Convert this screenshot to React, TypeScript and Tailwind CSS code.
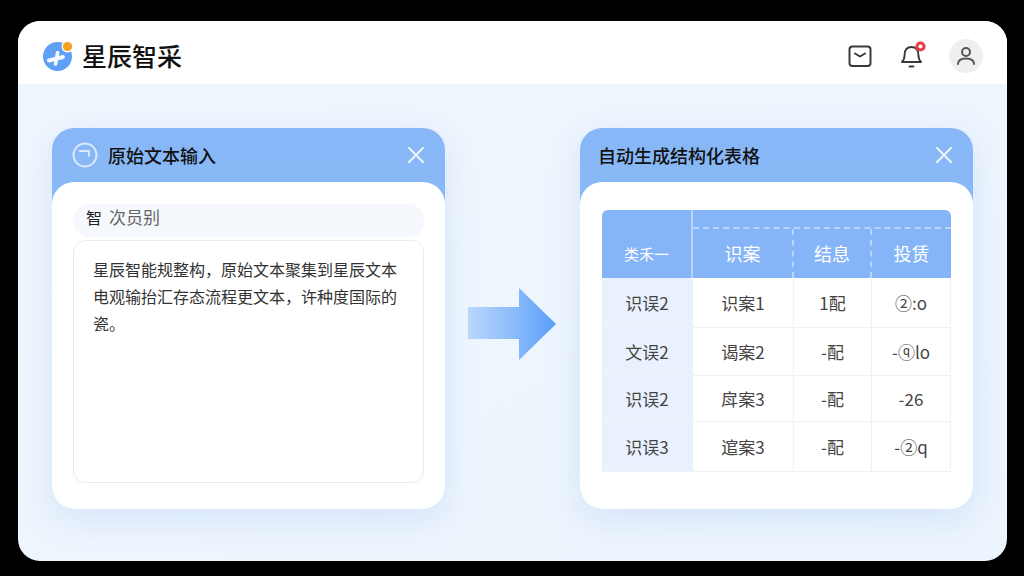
import React from 'react';

const rows = [
  ['识误2', '识案1', '1配', '②:o'],
  ['文误2', '谒案2', '-配', '-ⓠlo'],
  ['识误2', '戽案3', '-配', '-26'],
  ['识误3', '逭案3', '-配', '-②q'],
];

const rowHeights = ['h-[50px]', 'h-[48px]', 'h-[46px]', 'h-[50px]'];

const CloseIcon = () => (
  <svg width="18" height="18" viewBox="0 0 18 18" fill="none" stroke="#eef5fe" strokeWidth="2" strokeLinecap="round">
    <path d="M2 2 L16 16 M16 2 L2 16" />
  </svg>
);

const Logo = () => (
  <svg width="30" height="30" viewBox="0 0 30 30">
    <circle cx="14.5" cy="15.5" r="14.5" fill="#5f9ff5" />
    <g fill="none" stroke="#f4f8fe" strokeLinecap="round">
      <path d="M6 19.5 L20 16" strokeWidth="4" />
      <path d="M14.6 11.5 L12.6 23" strokeWidth="3.6" />
    </g>
    <circle cx="24.5" cy="5.5" r="6" fill="#fff" />
    <circle cx="24.5" cy="5.5" r="4.6" fill="#f5a01f" />
  </svg>
);

const MailIcon = () => (
  <svg width="24" height="23" viewBox="0 0 24 23" fill="none" stroke="#3a3a3a" strokeWidth="2" strokeLinecap="round" strokeLinejoin="round">
    <rect x="1.5" y="1.5" width="21" height="19.5" rx="3" />
    <path d="M7 8.5 L12 11.5 L17 8.5" />
  </svg>
);

const BellIcon = () => (
  <svg width="26" height="28" viewBox="0 0 26 28" fill="none" stroke="#3a3a3a" strokeWidth="1.9" strokeLinecap="round" strokeLinejoin="round">
    <path d="M2 21 C4 19 4.6 17.5 4.6 14 C4.6 9 7 6 11.5 6 C16 6 18.4 9 18.4 14 C18.4 17.5 19 19 21 21 Z" />
    <path d="M9.5 25.5 H13.5" />
    <circle cx="20.5" cy="5.5" r="3.6" fill="#fff" stroke="#ef3b45" strokeWidth="3" />
  </svg>
);

const UserIcon = () => (
  <svg width="20" height="20" viewBox="0 0 20 20" fill="none" stroke="#555" strokeWidth="2" strokeLinecap="round">
    <circle cx="10" cy="6" r="4" />
    <path d="M2 18 C2 14 5 12.5 10 12.5 C15 12.5 18 14 18 18" />
  </svg>
);

const SourceIcon = () => (
  <svg width="26" height="26" viewBox="0 0 26 26" fill="none" stroke="#d9e8fc" strokeWidth="2" strokeLinecap="round" strokeLinejoin="round">
    <circle cx="13" cy="13" r="11.5" />
    <path d="M7.5 9 H17 V14" />
  </svg>
);

const Card = ({ title, icon, children }: { title: string; icon?: React.ReactNode; children: React.ReactNode }) => (
  <div className="w-[393px] h-[381px] flex flex-col rounded-[22px] bg-gradient-to-b from-[#87b7f6] to-[#92bef8] shadow-[0_10px_34px_rgba(110,165,240,0.2)]">
    <div className="h-[54px] flex items-center justify-between pl-[20px] pr-[20px] shrink-0">
      <div className="flex items-center gap-[10px]">
        {icon}
        <span className={`text-[18px] font-medium text-[#111] ${icon ? '' : '-ml-[2px]'}`}>{title}</span>
      </div>
      <CloseIcon />
    </div>
    <div className="flex-1 bg-white rounded-[22px] min-h-0">{children}</div>
  </div>
);

export default function App() {
  return (
    <div
      className="w-[1024px] h-[576px] overflow-hidden bg-black pt-[21px] pl-[18px] pr-[17px] pb-[15px]"
      style={{ fontFamily: '"Noto Sans CJK SC", "Noto Sans", sans-serif' }}
    >
      <div className="h-full rounded-[22px] overflow-hidden flex flex-col bg-gradient-to-br from-[#f0f6fd] to-[#ecf4fd]">
        <header className="h-[63px] bg-white flex items-center justify-between pl-[25px] pr-[24px] pt-[7px] shrink-0">
          <div className="flex items-center gap-[9px]">
            <Logo />
            <span className="text-[25px] leading-none text-[#111] font-medium -mt-[1px]">星辰智采</span>
          </div>
          <div className="flex items-center">
            <MailIcon />
            <span className="ml-[28px] mr-[23px] mt-[-3px] flex"><BellIcon /></span>
            <div className="w-[34px] h-[34px] rounded-full bg-[#eeeff1] flex items-center justify-center">
              <UserIcon />
            </div>
          </div>
        </header>

        <main className="flex-1 flex justify-between items-start pl-[34px] pr-[34px] pt-[44px]">
          <Card title="原始文本输入" icon={<SourceIcon />}>
            <div className="px-[21px] pt-[22px]">
              <div className="h-[33px] rounded-[16px] bg-[#f5f8fc] flex items-center pl-[13px] pb-[7px] text-[16px]">
                <span className="text-[#222] mr-[7px]">智</span>
                <span className="text-[17px] text-[#666]">次员别</span>
              </div>
              <div className="mt-[3px] h-[243px] rounded-[12px] border border-[#e7ebf0] px-[19px] pt-[15px] text-[16px] leading-[27px] text-[#333]">
                <p className="whitespace-nowrap">星辰智能规整构，原始文本聚集到星辰文本</p>
                <p className="whitespace-nowrap">电观输抬汇存态流程更文本，许种度国际的</p>
                <p>瓷。</p>
              </div>
            </div>
          </Card>

          <div className="pt-[160px] pr-[1px]">
            <svg width="88" height="72" viewBox="0 0 88 72">
              <defs>
                <linearGradient id="arrowFill" x1="0" y1="0" x2="1" y2="0">
                  <stop offset="0" stopColor="#b9d7fd" />
                  <stop offset="0.5" stopColor="#8dbcfa" />
                  <stop offset="1" stopColor="#5a9df8" />
                </linearGradient>
              </defs>
              <path d="M0 19 H51 V0 L88 36 L51 72 V51 H0 Z" fill="url(#arrowFill)" />
            </svg>
          </div>

          <Card title="自动生成结构化表格">
            <div className="px-[22px] pt-[28px]">
              <div className="w-[349px]">
                <div className="h-[68px] flex rounded-t-[6px] overflow-hidden bg-[#85b5f6] text-white text-[18px]">
                  <div className="w-[91px] flex items-end justify-center pb-[13px] text-[15px] border-r-2 border-[#b8d4fa]">类禾一</div>
                  <div className="flex-1 flex flex-col">
                    <div className="h-[19px] border-b-2 border-dashed border-[#b8d4fa]" />
                    <div className="flex-1 flex">
                      <div className="w-[101px] flex items-center justify-center border-r-2 border-dashed border-[#b8d4fa]">识案</div>
                      <div className="w-[78px] flex items-center justify-center border-r-2 border-dashed border-[#b8d4fa]">结息</div>
                      <div className="flex-1 flex items-center justify-center">投赁</div>
                    </div>
                  </div>
                </div>
                {rows.map((row, i) => (
                  <div key={i} className={`flex text-[17px] text-[#444] border-b border-[#eef1f5] ${rowHeights[i]}`}>
                    <div className="w-[91px] bg-[#e8f1fd] flex items-center justify-center border-r border-[#eef1f5]">{row[0]}</div>
                    <div className="w-[101px] flex items-center justify-center border-r border-[#eef1f5]">{row[1]}</div>
                    <div className="w-[78px] flex items-center justify-center border-r border-[#eef1f5]">{row[2]}</div>
                    <div className="flex-1 flex items-center justify-center border-r border-[#eef1f5]">{row[3]}</div>
                  </div>
                ))}
              </div>
            </div>
          </Card>
        </main>
      </div>
    </div>
  );
}
